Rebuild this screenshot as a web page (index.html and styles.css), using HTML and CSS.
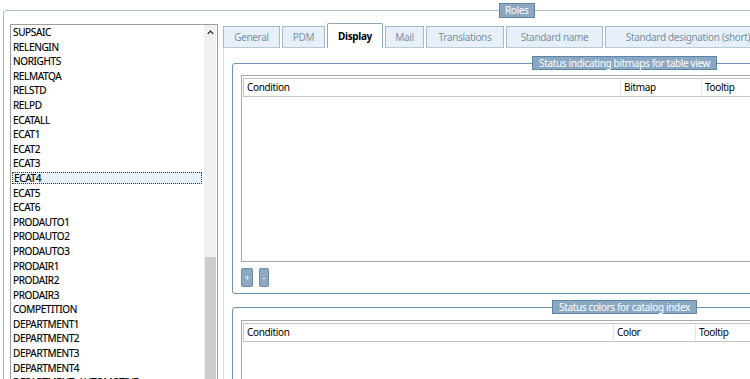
FILE: index.html
```html
<!DOCTYPE html>
<html lang="en">
<head>
  <meta charset="UTF-8">
  <title>Roles</title>
  <link rel="stylesheet" href="styles.css">
</head>
<body>
  <fieldset class="frame">
    <legend class="caption caption-roles">Roles</legend>
    <div class="frame-body">

      <div class="role-list">
        <ul class="roles">
          <li>SUPSAIC</li>
          <li>RELENGIN</li>
          <li>NORIGHTS</li>
          <li>RELMATQA</li>
          <li>RELSTD</li>
          <li>RELPD</li>
          <li>ECATALL</li>
          <li>ECAT1</li>
          <li>ECAT2</li>
          <li>ECAT3</li>
          <li class="selected">ECAT4</li>
          <li>ECAT5</li>
          <li>ECAT6</li>
          <li>PRODAUTO1</li>
          <li>PRODAUTO2</li>
          <li>PRODAUTO3</li>
          <li>PRODAIR1</li>
          <li>PRODAIR2</li>
          <li>PRODAIR3</li>
          <li>COMPETITION</li>
          <li>DEPARTMENT1</li>
          <li>DEPARTMENT2</li>
          <li>DEPARTMENT3</li>
          <li>DEPARTMENT4</li>
          <li>DEPARTMENT_AUTOMOTIVE</li>
        </ul>
        <div class="scrollbar">
          <svg class="arrow" width="7" height="5" viewBox="0 0 7 5">
            <path d="M0.5 4.2 L3.5 1.2 L6.5 4.2" fill="none" stroke="#222" stroke-width="1.4"/>
          </svg>
          <div class="thumb"></div>
        </div>
      </div>

      <div class="editor">
        <div class="tabs">
          <div class="tab tab-general">General</div>
          <div class="tab tab-pdm">PDM</div>
          <div class="tab tab-display active">Display</div>
          <div class="tab tab-mail">Mail</div>
          <div class="tab tab-translations">Translations</div>
          <div class="tab tab-stdname">Standard name</div>
          <div class="tab tab-stdshort">Standard designation (short)</div>
        </div>

        <div class="panel">
          <fieldset class="group">
            <legend class="caption caption-bitmaps">Status indicating bitmaps for table view</legend>
            <div class="grid grid-bitmaps">
              <div class="grid-head">
                <span>Condition</span>
                <span>Bitmap</span>
                <span>Tooltip</span>
              </div>
            </div>
            <div class="buttons">
              <button class="btn btn-add">+</button>
              <button class="btn btn-remove">-</button>
            </div>
          </fieldset>

          <fieldset class="group group-colors">
            <legend class="caption caption-colors">Status colors for catalog index</legend>
            <div class="grid grid-colors">
              <div class="grid-head">
                <span>Condition</span>
                <span>Color</span>
                <span>Tooltip</span>
              </div>
            </div>
          </fieldset>
        </div>
      </div>

    </div>
  </fieldset>
</body>
</html>
```

FILE: styles.css
```css
:root {
  --frame: #a9bed0;
  --group: #6f93b2;
  --caption-bg: #8ca7c0;
  --caption-border: #62839f;
  --tab-bg: #e7f0f8;
  --tab-border: #a3bacd;
  --tab-text: #7a90a4;
  --grid-border: #a8a8a8;
}

* {
  box-sizing: border-box;
}

html, body {
  margin: 0;
  padding: 0;
  width: 750px;
  height: 379px;
  overflow: hidden;
  background: #fff;
}

body {
  font-family: "Noto Sans", "DejaVu Sans", sans-serif;
  font-size: 10px;
  letter-spacing: -0.35px;
  color: #000;
}

/* outer frame */
.frame {
  margin: 3px 0 0 3px;
  padding: 0;
  width: 1026px;
  min-width: 0;
  border: 1px solid var(--frame);
  border-radius: 3px;
}

.caption {
  height: 15px;
  padding: 0 5px;
  line-height: 13px;
  color: #fff;
  background: var(--caption-bg);
  border: 1px solid var(--caption-border);
  white-space: nowrap;
}

.caption-roles {
  margin-left: 495px;
}

.frame-body {
  display: flex;
  gap: 5px;
  padding: 5px 0 0 6px;
}

/* role list */
.role-list {
  display: flex;
  flex: none;
  width: 208px;
  height: 380px;
  margin-top: 1px;
  border: 1px solid #9c9c9c;
}

.roles {
  flex: 1;
  margin: 0;
  padding: 0;
  list-style: none;
}

.roles li {
  height: 14.6px;
  padding-left: 2px;
  line-height: 14.6px;
  white-space: nowrap;
  overflow: hidden;
  -webkit-text-stroke: 0.15px #000;
}

.roles li.selected {
  height: 12px;
  margin: 1.3px 2px 1.3px 1px;
  padding-left: 1px;
  line-height: 10px;
  background: #e8f2fa;
  border: 1px dotted #333;
}

.scrollbar {
  flex: none;
  width: 12px;
  margin-right: 1px;
  background: #f0f0f0;
  display: flex;
  flex-direction: column;
  align-items: center;
}

.arrow {
  margin-top: 5px;
}

.thumb {
  width: 11px;
  height: 160px;
  margin-top: 222px;
  background: #cdcdcd;
}

/* tabs */
.editor {
  flex: none;
  width: 800px;
}

.tabs {
  display: flex;
  align-items: flex-end;
  gap: 2px;
  height: 25px;
}

.tab {
  height: 22px;
  line-height: 20px;
  text-align: center;
  color: var(--tab-text);
  background: var(--tab-bg);
  border: 1px solid var(--tab-border);
  border-bottom-color: #b8c9d8;
  white-space: nowrap;
}

.tab.active {
  height: 25px;
  line-height: 24px;
  color: #000;
  font-weight: bold;
  background: #fff;
  border-color: #8fa5b8;
  border-bottom: none;
  border-radius: 2px 2px 0 0;
}

.tab-general { width: 57px; }
.tab-pdm { width: 43px; }
.tab-display { width: 56px; }
.tab-mail { width: 39px; }
.tab-translations { width: 78px; }
.tab-stdname { width: 97px; }
.tab-stdshort { width: 166px; }

.panel {
  height: 340px;
  padding: 8px 0 0 8px;
  border-left: 1px solid #d6dde3;
}

/* groups */
.group {
  margin: 0;
  padding: 0 8px 6px 8px;
  width: 780px;
  min-width: 0;
  border: 1px solid var(--group);
  border-radius: 3px;
}

.group .caption {
  height: 14px;
  line-height: 12px;
  padding: 0 6px;
  border-color: #5f85a5;
  background: #8ba8c3;
}

.caption-bitmaps {
  margin-left: 291px;
}

.caption-colors {
  margin-left: 311px;
}

.group-colors {
  margin-top: 6px;
  height: 100px;
}

.grid {
  margin-top: 5px;
  height: 187px;
  padding: 2px 1px;
  border: 1px solid var(--grid-border);
}

.grid-colors {
  margin-top: 6px;
}

.grid-head {
  display: grid;
  height: 19px;
  line-height: 17px;
  border: 1px solid #c4c4c4;
  border-right: none;
}

.grid-bitmaps .grid-head {
  grid-template-columns: 377px 81px 1fr;
}

.grid-colors .grid-head {
  grid-template-columns: 370px 82px 1fr;
}

.grid-head span {
  padding-left: 3px;
  border-right: 1px solid #e6e6e6;
}

/* add / remove */
.buttons {
  display: flex;
  gap: 6px;
  margin-top: 6px;
}

.btn {
  height: 19px;
  padding: 0;
  font-family: inherit;
  font-size: 9px;
  line-height: 15px;
  color: #fff;
  background: #8fa9c2;
  border: 1px solid #6b8ba8;
  border-radius: 2px;
}

.btn-add { width: 12px; }
.btn-remove { width: 10px; }
```
